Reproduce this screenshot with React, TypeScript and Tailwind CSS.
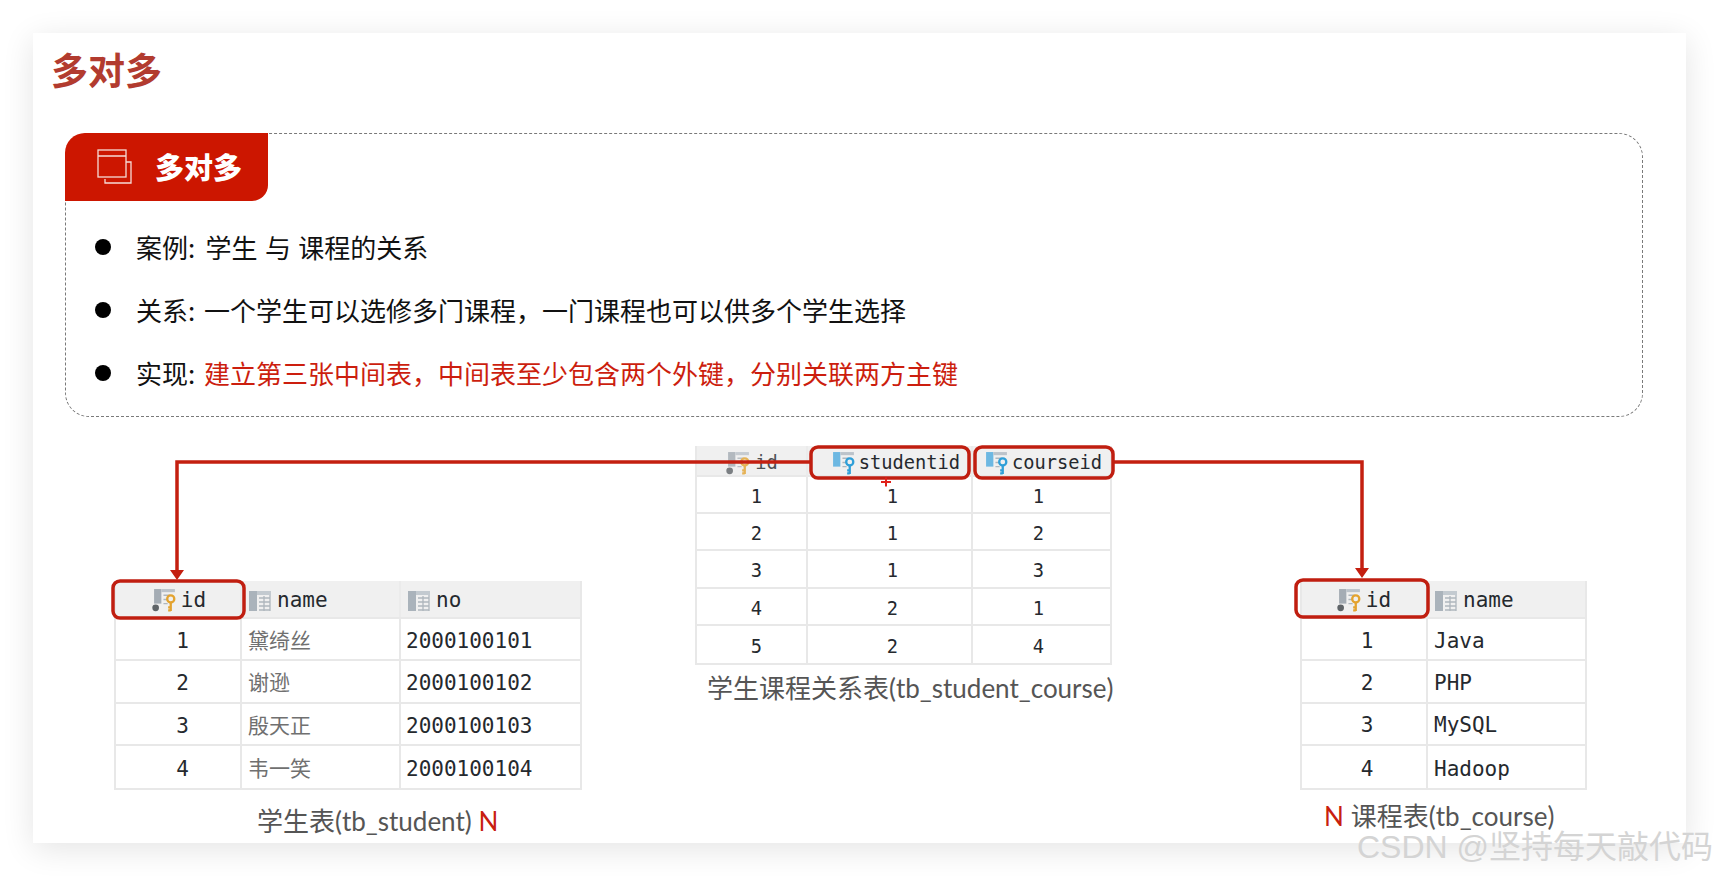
import React from 'react';

const cjk = "font-['Noto_Sans_CJK_SC','Noto_Sans',sans-serif]";
const caption = "font-['Lato','Noto_Sans_CJK_SC',sans-serif] text-[26px] leading-[36px] text-[#555555] whitespace-nowrap";
const mono = "font-['DejaVu_Sans_Mono','Noto_Sans_CJK_SC',monospace]";

const ColumnIcon = () => (
  <svg width="22" height="20" viewBox="0 0 22 20" className="shrink-0">
    <rect x="0" y="0" width="8" height="20" fill="#aab3bb" />
    <rect x="8" y="0" width="14" height="4" fill="#c3cad0" />
    <path d="M10 7h11M10 11h11M10 15h11M10 19h11M15 5v15M21 4v16" stroke="#aeb6bd" strokeWidth="1.3" fill="none" />
  </svg>
);

const KeyIcon = ({ blue }: { blue?: boolean }) => {
  const key = blue ? '#2f9fd8' : '#e3a32f';
  return (
    <svg width="25" height="23" viewBox="0 0 24 22" className="shrink-0">
      <rect x="2" y="0" width="7" height="14" fill={blue ? '#6db8e2' : '#a4acb4'} />
      <rect x="9" y="0" width="13" height="3" fill="#bcc3ca" />
      <path d="M11 6h6M11 10h4M11 14h4" stroke="#aeb6bd" strokeWidth="1.3" fill="none" />
      {!blue && <circle cx="3.500" cy="18" r="3.200" fill="#5f6468" />}
      <circle cx="18" cy="9.500" r="3.400" fill="none" stroke={key} strokeWidth="2.200" />
      <path d="M18 13v8M18 17.500h-2.500M18 20.500h-2.500" stroke={key} strokeWidth="2.200" fill="none" />
    </svg>
  );
};

const WindowIcon = () => (
  <svg width="36" height="36" viewBox="0 0 36 36" fill="none" stroke="#f6dcd6" strokeWidth="1.3" className="shrink-0">
    <rect x="1" y="1" width="28" height="27" />
    <path d="M1 7h28M29 13h5v21H8v-4" />
  </svg>
);

type Head = { label: string; icon: React.ReactNode; cls: string };

const DbTable = ({
  cols,
  heads,
  rows,
  headH,
  rowH,
  text,
  aligns,
}: {
  cols: string;
  heads: Head[];
  rows: string[][];
  headH: string;
  rowH: string;
  text: string;
  aligns: string[];
}) => (
  <div className={`${mono} ${text} border-x-2 border-b-2 border-[#e8e8e8] text-[#25292e]`}>
    <div className={`grid ${cols} ${headH} bg-[#f0f0f0] border-b-2 border-[#e8e8e8]`}>
      {heads.map((h) => (
        <div key={h.label} className={`flex items-center pt-[3px] border-r-2 border-[#ebebeb] last:border-r-0 ${h.cls}`}>
          {h.icon}
          <span>{h.label}</span>
        </div>
      ))}
    </div>
    {rows.map((row, i) => (
      <div key={i} className={`grid ${cols} ${rowH} border-b-2 border-[#e8e8e8] last:border-b-0`}>
        {row.map((cell, j) => (
          <div key={j} className={`flex items-center pt-[5px] border-r-2 border-[#e8e8e8] last:border-r-0 ${aligns[j]}`}>
            {/[\u4e00-\u9fa5]/.test(cell) ? <span className={`${cjk} mb-[4px] text-[#707070] text-[21px]`}>{cell}</span> : cell}
          </div>
        ))}
      </div>
    ))}
  </div>
);

const Overlay = () => (
  <svg className="absolute inset-0 pointer-events-none" width="1719" height="876" viewBox="0 0 1719 876" fill="none">
    <path d="M810 462H177V572M1113 462H1362V570" stroke="#c41f10" strokeWidth="3.500" />
    <path d="M170 570h14l-7 10zM1355 568h14l-7 10z" fill="#c41f10" />
    <rect x="113" y="581" width="131" height="37" rx="7" stroke="#c01e10" strokeWidth="3.500" />
    <rect x="811" y="447" width="158" height="31" rx="7" stroke="#c01e10" strokeWidth="3.500" />
    <rect x="975" y="447" width="138" height="31" rx="7" stroke="#c01e10" strokeWidth="3.500" />
    <rect x="1296" y="580" width="132" height="37" rx="7" stroke="#c01e10" strokeWidth="3.500" />
    <path d="M881 482h10M886 477.500v9" stroke="#e0201a" strokeWidth="2" />
  </svg>
);

const App = () => {
  return (
    <div className="relative w-[1719px] h-[876px] overflow-hidden bg-white pt-[33px] pl-[33px]">
      <div className="w-[1653px] h-[810px] bg-white shadow-[0_6px_30px_rgba(0,0,0,0.11)] pt-[11px]">
        <h1 className={`${cjk} pl-[18px] text-[37px] leading-[50px] font-bold text-[#b23b2f]`}>多对多</h1>

        <div className="ml-[32px] mt-[39px] w-[1578px] h-[284px] rounded-[24px] border border-dashed border-[#7a7a7a]">
          <div className={`${cjk} -mt-px -ml-px flex h-[68px] w-[203px] items-center gap-[22px] rounded-tl-[20px] rounded-br-[16px] bg-[#cc1600] pl-[32px] text-[29px] font-black text-white`}>
            <WindowIcon />
            <span>多对多</span>
          </div>
          <ul className={`${cjk} mt-[14px] pl-[29px] text-[26px] leading-[63px] text-[#111111]`}>
            <li className="flex items-center gap-[25px]">
              <span className="h-[16px] w-[16px] rounded-full bg-black" />
              <span className="[word-spacing:1.500px]">
                <span className="mr-[3px]">案例:</span> 学生 与 课程的关系
              </span>
            </li>
            <li className="flex items-center gap-[25px]">
              <span className="h-[16px] w-[16px] rounded-full bg-black" />
              <span>
                <span className="mr-[3px]">关系:</span> 一个学生可以选修多门课程，一门课程也可以供多个学生选择
              </span>
            </li>
            <li className="flex items-center gap-[25px]">
              <span className="h-[16px] w-[16px] rounded-full bg-black" />
              <span>
                <span className="mr-[3px]">实现:</span> <span className="text-[#cc1e0e]">建立第三张中间表，中间表至少包含两个外键，分别关联两方主键</span>
              </span>
            </li>
          </ul>
        </div>

        <div className="mt-[29px] flex items-start">
          <div className="ml-[81px] mt-[135px] w-[468px]">
            <DbTable
              cols="grid-cols-[126px_159px_179px]"
              headH="h-[38px]"
              rowH="h-[42.300px]"
              text="text-[21px]"
              aligns={['justify-center pl-[9px]', 'pl-[6px]', 'pl-[5px]']}
              heads={[
                { label: 'id', icon: <KeyIcon />, cls: 'justify-center gap-[4px] pl-[2px]' },
                { label: 'name', icon: <ColumnIcon />, cls: 'pl-[7px] gap-[6px]' },
                { label: 'no', icon: <ColumnIcon />, cls: 'pl-[7px] gap-[6px]' },
              ]}
              rows={[
                ['1', '黛绮丝', '2000100101'],
                ['2', '谢逊', '2000100102'],
                ['3', '殷天正', '2000100103'],
                ['4', '韦一笑', '2000100104'],
              ]}
            />
            <p className={`${caption} mt-[13px] pl-[143px]`}>
              学生表(tb_student) <span className="text-[#c8200f]">N</span>
            </p>
          </div>

          <div className="ml-[113px] w-[417px]">
            <DbTable
              cols="grid-cols-[111px_165px_137px]"
              headH="h-[31px]"
              rowH="h-[37.200px]"
              text="text-[18.700px]"
              aligns={['justify-center pl-[10px]', 'justify-center pl-[6px]', 'justify-center pr-[6px]']}
              heads={[
                { label: 'id', icon: <KeyIcon />, cls: 'justify-center gap-[4px] pl-[1px] opacity-80' },
                { label: 'studentid', icon: <KeyIcon blue />, cls: 'justify-end gap-[3px] pr-[11px]' },
                { label: 'courseid', icon: <KeyIcon blue />, cls: 'justify-end gap-[3px] pr-[8px]' },
              ]}
              rows={[
                ['1', '1', '1'],
                ['2', '1', '2'],
                ['3', '1', '3'],
                ['4', '2', '1'],
                ['5', '2', '4'],
              ]}
            />
            <p className={`${caption} mt-[5px] pl-[12px]`}>学生课程关系表(tb_student_course)</p>
          </div>

          <div className="ml-[188px] mt-[135px] w-[287px]">
            <DbTable
              cols="grid-cols-[126px_157px]"
              headH="h-[38px]"
              rowH="h-[42.300px]"
              text="text-[21px]"
              aligns={['justify-center pl-[6px]', 'pl-[6px]']}
              heads={[
                { label: 'id', icon: <KeyIcon />, cls: 'justify-center gap-[4px]' },
                { label: 'name', icon: <ColumnIcon />, cls: 'pl-[7px] gap-[6px]' },
              ]}
              rows={[
                ['1', 'Java'],
                ['2', 'PHP'],
                ['3', 'MySQL'],
                ['4', 'Hadoop'],
              ]}
            />
            <p className={`${caption} mt-[8px] pl-[24px]`}>
              <span className="text-[#c8200f]">N</span>
              <span className="ml-[7px]">课程表(tb_course)</span>
            </p>
          </div>
        </div>
      </div>

      <Overlay />

      <div className="absolute left-[1357px] top-[826px] font-['Liberation_Sans','Noto_Sans_CJK_SC',sans-serif] text-[32px] leading-[42px] whitespace-nowrap text-[#d4d4d4]">
        CSDN @坚持每天敲代码
      </div>
    </div>
  );
};

export default App;
